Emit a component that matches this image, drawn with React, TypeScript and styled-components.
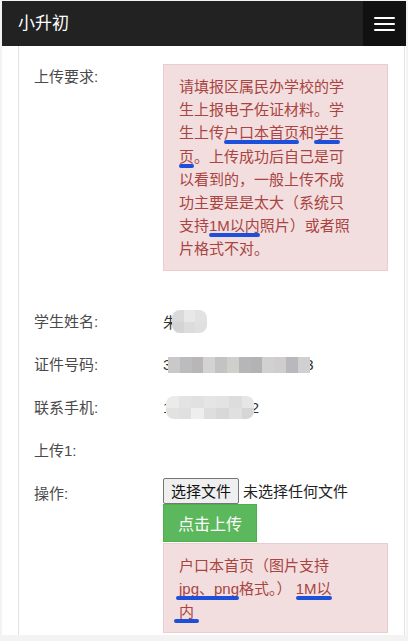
import React from "react";
import styled, { createGlobalStyle } from "styled-components";

const GlobalStyle = createGlobalStyle`
  html, body {
    margin: 0;
    padding: 0;
    background: #f3f3f3;
  }
  body {
    font-family: "Liberation Sans", "Noto Sans CJK SC", sans-serif;
    color: #333;
  }
  * {
    box-sizing: border-box;
  }
`;

const Page = styled.div`
  padding: 1px 2px 0 2px;
  width: 408px;
`;

const Navbar = styled.div`
  height: 45px;
  background: #222;
  display: flex;
  align-items: stretch;
  justify-content: space-between;
`;

const Brand = styled.div`
  color: #fff;
  font-size: 17px;
  line-height: 45px;
  padding-left: 16px;
`;

const Toggle = styled.button`
  width: 43px;
  background: #111;
  border: none;
  padding: 0;
  display: flex;
  flex-direction: column;
  align-items: center;
  justify-content: center;
  gap: 4px;
  cursor: pointer;
`;

const IconBar = styled.span`
  display: block;
  width: 21px;
  height: 2px;
  background: #fff;
  border-radius: 1px;
`;

const Main = styled.div`
  background: #fff;
  padding-left: 16px;
  padding-right: 1px;
`;

const Panel = styled.div`
  border-left: 1px solid #e2e2e2;
  border-right: 1px solid #e2e2e2;
  padding: 18px 16px 2px 15px;
`;

const Row = styled.div<{ $h?: number }>`
  display: grid;
  grid-template-columns: 129px 1fr;
  align-items: start;
  min-height: ${(p) => (p.$h ? `${p.$h}px` : "auto")};
`;

const Label = styled.div<{ $top?: number }>`
  font-size: 15px;
  line-height: 22px;
  color: #4a4a4a;
  padding-top: ${(p) => p.$top ?? 0}px;
`;

const Alert = styled.div<{ $mb?: number; $mt?: number }>`
  background: #f2dede;
  border: 1px solid #ebccd1;
  color: #a94442;
  font-size: 15px;
  line-height: 23.2px;
  padding: 10px 35px 9px 15px;
  margin-top: ${(p) => p.$mt ?? 0}px;
  margin-bottom: ${(p) => p.$mb ?? 0}px;
`;

const Mark = styled.span<{ $l?: number; $r?: number }>`
  position: relative;
  &::after {
    content: "";
    position: absolute;
    left: ${(p) => p.$l ?? 0}px;
    right: ${(p) => p.$r ?? 0}px;
    bottom: -3px;
    height: 4px;
    border-radius: 2px;
    background: #1d4fd9;
  }
`;

const Value = styled.div`
  display: flex;
  align-items: center;
  height: 22px;
  font-size: 15px;
  color: #333;
`;

const Peek = styled.span<{ $w: number; $end?: boolean }>`
  display: inline-flex;
  justify-content: ${(p) => (p.$end ? "flex-end" : "flex-start")};
  width: ${(p) => p.$w}px;
  overflow: hidden;
  white-space: nowrap;
`;

const Mosaic = styled.span<{ $cols: number; $cw: number; $ch: number; $radius: number }>`
  display: inline-grid;
  grid-template-columns: repeat(${(p) => p.$cols}, ${(p) => p.$cw}px);
  grid-auto-rows: ${(p) => p.$ch}px;
  border-radius: ${(p) => p.$radius}px;
  overflow: hidden;
  filter: blur(0.6px);
`;

const Cell = styled.span<{ $c: string }>`
  background: ${(p) => p.$c};
`;

const FileRow = styled.div`
  display: flex;
  align-items: center;
  height: 26px;
  margin-top: 6px;
  font-size: 15px;
  color: #222;
`;

const FileButton = styled.button`
  height: 26px;
  font-family: inherit;
  font-size: 15px;
  color: #111;
  background: #efefef;
  border: 1px solid #767676;
  border-radius: 2px;
  padding: 0 7px;
  margin-right: 4px;
`;

const UploadButton = styled.button`
  display: block;
  height: 38px;
  width: 94px;
  font-family: inherit;
  font-size: 16px;
  color: #fff;
  background: #5cb85c;
  border: 1px solid #4cae4c;
  border-radius: 0;
  padding: 0;
`;

const Footer = styled.div`
  height: 9px;
`;

const Blurred: React.FC<{
  first: string;
  last?: string;
  firstW: number;
  lastW?: number;
  cols: number;
  cw: number;
  ch: number;
  radius: number;
  colors: string[];
}> = ({ first, last, firstW, lastW, cols, cw, ch, radius, colors }) => (
  <Value>
    <Peek $w={firstW}>{first}</Peek>
    <Mosaic $cols={cols} $cw={cw} $ch={ch} $radius={radius}>
      {colors.map((c, i) => (
        <Cell key={i} $c={c} />
      ))}
    </Mosaic>
    {last && (
      <Peek $w={lastW ?? 5} $end>
        {last}
      </Peek>
    )}
  </Value>
);

const App: React.FC = () => {
  return (
    <Page>
      <GlobalStyle />
      <Navbar>
        <Brand>小升初</Brand>
        <Toggle aria-label="menu">
          <IconBar />
          <IconBar />
          <IconBar />
        </Toggle>
      </Navbar>
      <Main>
        <Panel>
          <Row>
            <Label $top={2}>上传要求:</Label>
            <Alert $mb={30}>
              请填报区属民办学校的学生上报电子佐证材料。学生上传
              <Mark>户口本首页</Mark>和<Mark $r={4}>学生</Mark>
              <Mark>页</Mark>。上传成功后自己是可以看到的，一般上传不成功主要是是太大（系统只支持
              <Mark>1M以内</Mark>照片）或者照片格式不对。
            </Alert>
          </Row>

          <Row $h={43}>
            <Label $top={10}>学生姓名:</Label>
            <div style={{ paddingTop: 10 }}>
              <Blurred
                first="朱"
                firstW={9}
                cols={3}
                cw={11.5}
                ch={11.5}
                radius={8}
                colors={["#dadada", "#e8e8e8", "#e2e2e2", "#d4d4d4", "#dcdcdc", "#e0e0e0"]}
              />
            </div>
          </Row>

          <Row $h={43}>
            <Label $top={10}>证件号码:</Label>
            <div style={{ paddingTop: 10 }}>
              <Blurred
                first="3"
                last="3"
                firstW={5}
                lastW={4}
                cols={12}
                cw={11.8}
                ch={16}
                radius={0}
                colors={[
                  "#c9c9c9",
                  "#bcbcbe",
                  "#b8b6b6",
                  "#d3d3d3",
                  "#c3c3c3",
                  "#cfcfcb",
                  "#b6b6b8",
                  "#b4b2b2",
                  "#d1d1d1",
                  "#cfcdcd",
                  "#b9b9bd",
                  "#d0d0d0",
                ]}
              />
            </div>
          </Row>

          <Row $h={43}>
            <Label $top={10}>联系手机:</Label>
            <div style={{ paddingTop: 10 }}>
              <Blurred
                first="1"
                last="2"
                firstW={3}
                lastW={5}
                cols={7}
                cw={12.6}
                ch={11.5}
                radius={8}
                colors={[
                  "#ebebeb",
                  "#e3e3e3",
                  "#e1e1e1",
                  "#e5e5e5",
                  "#e3e3e3",
                  "#dddde0",
                  "#e6e6e6",
                  "#e2e2e2",
                  "#e0e0e0",
                  "#eeeeee",
                  "#dedede",
                  "#d8d8d8",
                  "#e0e0e0",
                  "#d6d6d6",
                ]}
              />
            </div>
          </Row>

          <Row $h={42}>
            <Label $top={10}>上传1:</Label>
            <div />
          </Row>

          <Row>
            <Label $top={11}>操作:</Label>
            <div>
              <FileRow>
                <FileButton type="button">选择文件</FileButton>
                未选择任何文件
              </FileRow>
              <UploadButton type="button">点击上传</UploadButton>
              <Alert $mt={1}>
                户口本首页（图片支持
                <Mark $l={-3}>jpg、png</Mark>格式。） <Mark>1M以</Mark>
                <br />
                <Mark $l={-5} $r={-5}>内</Mark>
              </Alert>
            </div>
          </Row>
        </Panel>
      </Main>
      <Footer />
    </Page>
  );
};

export default App;
